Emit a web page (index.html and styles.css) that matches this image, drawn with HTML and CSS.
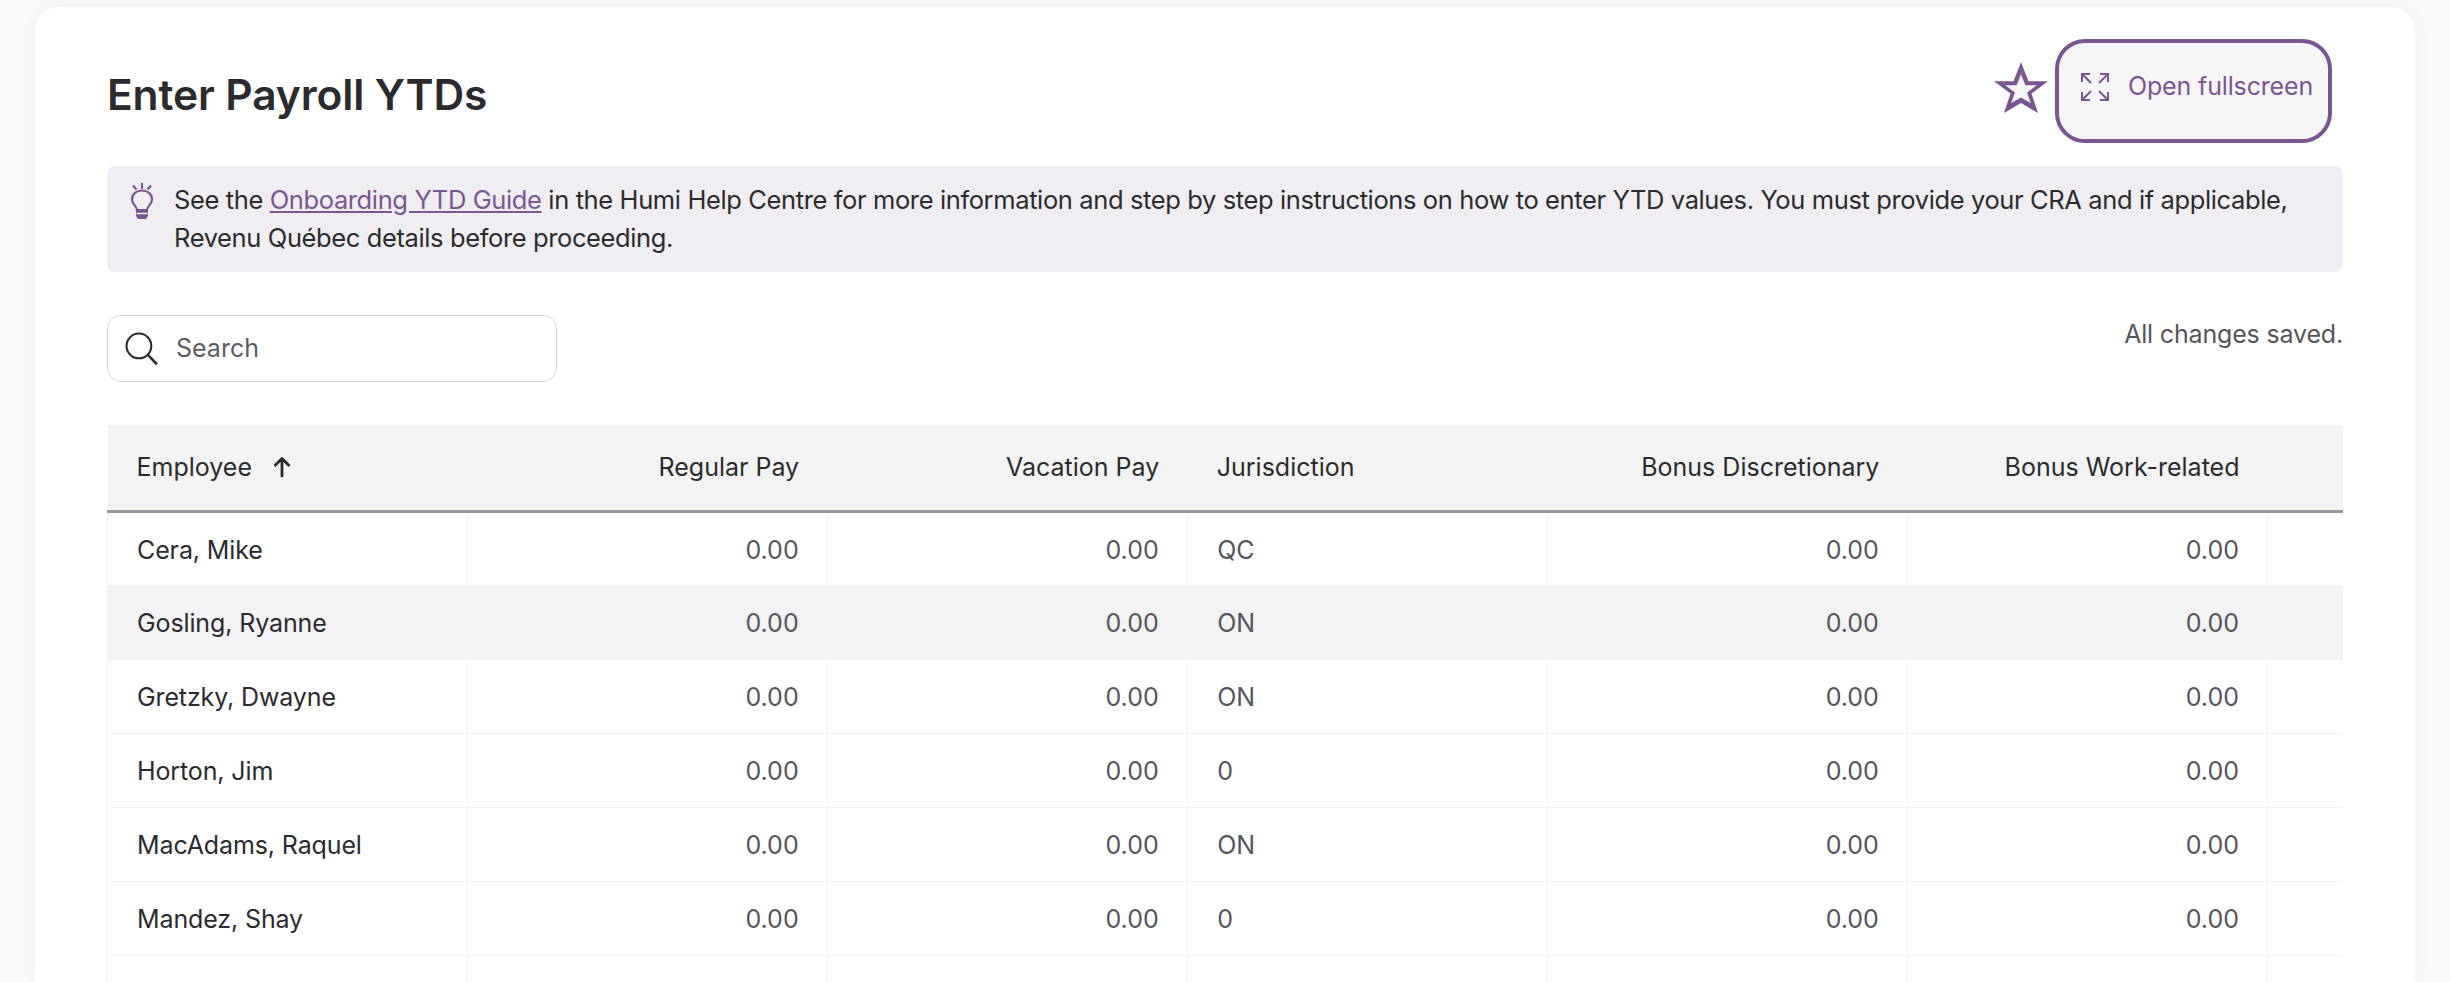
FILE: index.html
```html
<!DOCTYPE html>
<html lang="en">
<head>
<meta charset="utf-8">
<title>Enter Payroll YTDs</title>
<link rel="stylesheet" href="styles.css">
</head>
<body>
<main class="card">
  <header class="top">
    <h1 class="title">Enter Payroll YTDs</h1>
    <div class="actions">
      <svg class="star" viewBox="0 0 54 52"><path d="M27 0L34.500 19.300H54L37.500 31.500L44 51L27 41L10 51L16.500 31.500L0 19.300H19.500Z" fill="#7a5592"/><path d="M27 12.200L31.400 23.200H42.800L33.100 30.400L36.900 41.300L27 35.500L17.100 41.300L20.900 30.400L11.200 23.200H22.600Z" fill="#f6f6f9"/></svg>
      <button class="fs-btn" type="button">
        <svg class="fs-icon" viewBox="0 0 30 30" fill="none" stroke="#7a5592" stroke-width="2"><path d="M2 10V2H10M2 2L11 11M20 2H28V10M28 2L19 11M2 20V28H10M2 28L11 19M28 20V28H20M28 28L19 19"/></svg>
        <span>Open fullscreen</span>
      </button>
    </div>
  </header>

  <section class="notice">
    <svg class="bulb" viewBox="0 0 24 38" fill="none" stroke="#7a5592" stroke-width="2.200"><path d="M12 1V7M3 3.500L6.500 7.500M21 3.500L17.500 7.500"/><path d="M7 28C7 24 2 22.500 2 17.500C2 12 6.500 8.500 12 8.500C17.500 8.500 22 12 22 17.500C22 22.500 17 24 17 28Z"/><path d="M6 28H18V34L16 37H8L6 34Z" fill="#7a5592" stroke="none"/><path d="M6.500 31.500H17.500" stroke="#f0eef3" stroke-width="1.500"/></svg>
    <p class="notice-text">See the <a href="#">Onboarding YTD Guide</a> in the Humi Help Centre for more information and step by step instructions on how to enter YTD values. You must provide your CRA and if applicable, Revenu Québec details before proceeding.</p>
  </section>

  <div class="tools">
    <label class="search">
      <svg class="search-icon" viewBox="0 0 32 32" fill="none" stroke="#2b2b2e" stroke-width="2"><circle cx="13.500" cy="13.500" r="12"/><path d="M22 22L31 31.500" stroke-width="2.500"/></svg>
      <input class="search-input" type="text" placeholder="Search">
    </label>
    <span class="saved">All changes saved.</span>
  </div>

  <table class="grid">
    <thead>
      <tr>
        <th class="left"><span class="sort">Employee <svg class="arrow" viewBox="0 0 20 20" fill="none" stroke="#2b2b2e" stroke-width="2.800"><path d="M10 20V2M2.500 9L10 1.500L17.500 9"/></svg></span></th>
        <th>Regular Pay</th><th>Vacation Pay</th><th class="left">Jurisdiction</th><th>Bonus Discretionary</th><th>Bonus Work-related</th><th class="tail"></th>
      </tr>
    </thead>
    <tbody>
      <tr><td class="name">Cera, Mike</td><td>0.00</td><td>0.00</td><td class="left">QC</td><td>0.00</td><td>0.00</td><td></td></tr>
      <tr class="hover"><td class="name">Gosling, Ryanne</td><td>0.00</td><td>0.00</td><td class="left">ON</td><td>0.00</td><td>0.00</td><td></td></tr>
      <tr><td class="name">Gretzky, Dwayne</td><td>0.00</td><td>0.00</td><td class="left">ON</td><td>0.00</td><td>0.00</td><td></td></tr>
      <tr><td class="name">Horton, Jim</td><td>0.00</td><td>0.00</td><td class="left">0</td><td>0.00</td><td>0.00</td><td></td></tr>
      <tr><td class="name">MacAdams, Raquel</td><td>0.00</td><td>0.00</td><td class="left">ON</td><td>0.00</td><td>0.00</td><td></td></tr>
      <tr><td class="name">Mandez, Shay</td><td>0.00</td><td>0.00</td><td class="left">0</td><td>0.00</td><td>0.00</td><td></td></tr>
      <tr><td class="name"></td><td></td><td></td><td class="left"></td><td></td><td></td><td></td></tr>
    </tbody>
  </table>
</main>
</body>
</html>
```
FILE: styles.css
```css
* { box-sizing: border-box; }
html, body { margin: 0; height: 982px; overflow: hidden; background: #faf9f7; }
body { font-family: Inter, "Liberation Sans", sans-serif; color: #2b2b2e; padding: 7px 35px 0; }
.card { background: #fff; border-radius: 24px 24px 0 0; padding: 32px 72px 0; height: 975px; overflow: hidden; box-shadow: 0 0 16px rgba(120, 110, 100, .08); }
.top { display: flex; justify-content: space-between; align-items: flex-start; height: 127px; }
.title { margin: 32px 0 0; font-size: 42.5px; line-height: 48px; font-weight: 600; letter-spacing: -.12px; }
.actions { display: flex; align-items: flex-start; gap: 7px; margin-right: 11px; }
.star { width: 54px; height: 52px; margin-top: 23px; }
.fs-btn { display: flex; align-items: flex-start; gap: 18px; width: 277px; height: 104px; padding: 25px 0 0 21px; border: 4px solid #7a5592; border-radius: 30px; background: #f6f6f9; color: #7a5592; font: 400 25px/36px Inter, sans-serif; letter-spacing: -.15px; white-space: nowrap; }
.fs-icon { width: 30px; height: 30px; flex: none; margin-top: 4px; }
.notice { display: flex; gap: 20px; height: 106px; padding: 16px 24px 0 23px; background: #f0eef3; border-radius: 8px; }
.bulb { width: 24px; height: 38px; flex: none; }
.notice-text { margin: -1px 0 0; font-size: 25.500px; line-height: 38px; letter-spacing: -.38px; }
.notice-text a { color: #7a5592; }
.tools { display: flex; justify-content: space-between; align-items: flex-start; margin-top: 43px; height: 110px; }
.search { display: flex; align-items: center; gap: 16px; width: 450px; height: 67px; padding: 0 16px 2px 17px; border: 1.500px solid #d4d4d7; border-radius: 14px; }
.search-icon { width: 33px; height: 33px; flex: none; margin-bottom: -2px; }
.search-input { flex: 1; min-width: 0; border: 0; outline: 0; background: none; font: 400 25px Inter, sans-serif; color: #55555b; }
.search-input::placeholder { color: #5b5b60; opacity: 1; }
.saved { font-size: 25px; line-height: 38px; letter-spacing: -.17px; color: #55555b; }
.grid { width: 2236px; table-layout: fixed; border-collapse: collapse; font-size: 25px; }
.grid th { height: 86px; padding: 0 28.500px 0 29px; background: #f3f3f4; border-bottom: 3px solid #9a99a2; text-align: right; font-weight: 400; width: 360px; color: #2b2b2e; }
.grid th.tail { width: 75px; }
.grid td { height: 74px; padding: 2px 28.500px 0 29px; text-align: right; color: #55555b; border: 1px solid #f3f3f3; border-width: 0 1px 1px 0; }
.grid td:first-child { border-left: 1px solid #f3f3f3; }
.grid td:last-child { border-right: 0; }
.grid th.left, .grid td.left { text-align: left; }
.grid td.name { text-align: left; color: #2b2b2e; letter-spacing: -.12px; }
.grid tr.hover td { background: #f3f2f5; border-color: #f3f2f5; }
.sort { display: inline-flex; align-items: center; gap: 20px; }
.arrow { width: 20px; height: 20px; }
```
